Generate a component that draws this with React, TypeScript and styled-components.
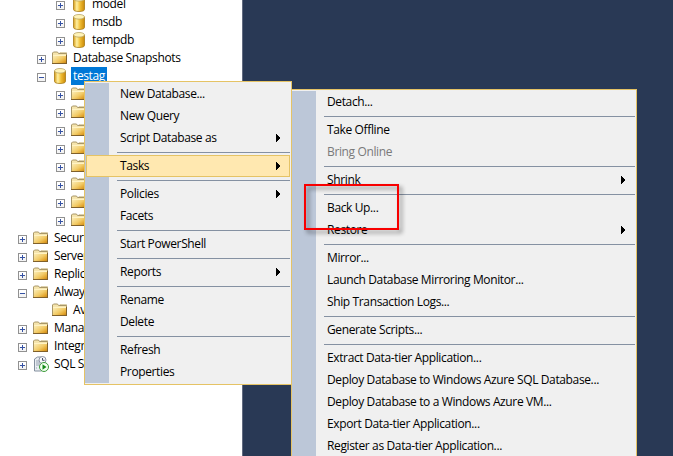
import React from "react";
import styled, { createGlobalStyle } from "styled-components";

const GlobalStyle = createGlobalStyle`
  * { box-sizing: border-box; }
  body { margin: 0; overflow: hidden; }
`;

const Window = styled.main`
  position: relative;
  display: flex;
  width: 673px;
  height: 456px;
  overflow: hidden;
  background: #293955;
  color: #000;
  font: 12px/18px "Open Sans", "Noto Sans", sans-serif;
  letter-spacing: -0.37px;
  white-space: nowrap;
`;

const Explorer = styled.aside`
  width: 243px;
  height: 456px;
  overflow: hidden;
  background: #fff;
  border-right: 1px solid #626b80;
`;

const Tree = styled.div`
  margin-top: -5px;
`;

const Row = styled.div<{ $level: number }>`
  display: flex;
  height: 18px;
  padding-left: ${(p) => p.$level * 19 - 1}px;
`;

const ExpanderSlot = styled.div`
  flex: none;
  width: 15px;
  padding-top: 6px;
  line-height: 0;
`;

const IconSlot = styled.div`
  flex: none;
  width: 17px;
  line-height: 0;
  margin-right: 2px;
`;

const Label = styled.span<{ $selected?: boolean }>`
  height: 18px;
  padding: 0 2px;
  line-height: 18px;
  color: ${(p) => (p.$selected ? "#fff" : "#000")};
  background: ${(p) => (p.$selected ? "#0078d7" : "transparent")};
`;

const Menu = styled.div<{ $x: number; $y: number; $width: number }>`
  position: absolute;
  left: ${(p) => p.$x}px;
  top: ${(p) => p.$y}px;
  width: ${(p) => p.$width}px;
  padding: 1px 1px 1px 0;
  border: 1px solid #e5c365;
  background: #f0f0f0;
`;

const MenuBody = styled.div`
  padding-left: 1px;
  background: linear-gradient(90deg, #bcc7d8 24px, #f0f0f0 24px);
`;

const MenuItem = styled.div<{ $active?: boolean; $disabled?: boolean }>`
  display: flex;
  align-items: flex-start;
  justify-content: space-between;
  height: 22px;
  padding: 1px 9px 0 33px;
  border: 1px solid ${(p) => (p.$active ? "#e5c365" : "transparent")};
  background: ${(p) => (p.$active ? "#ffe8b0" : "transparent")};
  color: ${(p) => (p.$disabled ? "#7a7a7a" : "#000")};
`;

const Arrow = styled.svg`
  display: block;
  width: 4px;
  height: 8px;
  margin-top: 5px;
`;

const Divider = styled.div`
  height: 6px;
  padding: 3px 0 2px 31px;

  &::before {
    content: "";
    display: block;
    height: 1px;
    background: #8591a2;
  }
`;

const Highlight = styled.div`
  position: absolute;
  left: 304px;
  top: 184px;
  width: 95px;
  height: 46px;
  border: 2px solid #f80000;
  filter: drop-shadow(3px 3px 2px rgba(0, 0, 0, 0.45));
`;

const Definitions = styled.svg`
  display: block;
  width: 0;
  height: 0;
`;

const Expander = ({ open }: { open?: boolean }) => (
  <svg width="9" height="9" shapeRendering="crispEdges">
    <rect x=".5" y=".5" width="8" height="8" fill="#f4f4f4" stroke="#919191" />
    <path d="M1 1h7v3H1z" fill="#fff" />
    <path d={open ? "M2 4h5v1H2z" : "M2 4h5v1H2zM4 2h1v5H4z"} fill="#3552a4" />
  </svg>
);

const FolderIcon = () => (
  <svg width="16" height="18">
    <path d="M8 3.500h6.500V6H8z" fill="#f6e9bd" stroke="#c9b98a" strokeWidth=".6" />
    <path d="M.5 14.500v-10.500l1-1h4l1 1.500h8v10z" fill="#f5e4ac" stroke="#a99768" />
    <path d="M1 6h14v9H1z" fill="url(#folderFace)" />
    <path d="M1 6.500h13" stroke="#fff3c4" />
    <path d="M0 14.500h15M14.500 6v9" stroke="#80602a" fill="none" />
  </svg>
);

const DatabaseIcon = () => (
  <svg width="16" height="18">
    <path d="M2.500 4v10.500c0 1.300 2.400 2 5.500 2s5.500-.7 5.500-2V4z" fill="url(#dbBody)" stroke="#a77b16" strokeWidth=".8" />
    <ellipse cx="8" cy="3.800" rx="5.500" ry="2.300" fill="#fff3b6" stroke="#b9a468" strokeWidth=".8" />
  </svg>
);

const AgentIcon = () => (
  <svg width="17" height="18">
    <path d="M1.500 4l3-2h5v13l-1 1h-7z" fill="#e9edf2" stroke="#84909f" />
    <path d="M3 6h4M3 8h4M3 10h4M3 13h1" stroke="#98a4b3" />
    <circle cx="9.500" cy="5" r="3.500" fill="#f7f8fb" stroke="#8d94a6" />
    <path d="M9.500 3v2.300h2" fill="none" stroke="#434d68" />
    <circle cx="11" cy="12" r="4.500" fill="#f3fff0" stroke="#3c9b3a" />
    <path d="M9.500 9.300v5.400l4-2.700z" fill="#148a18" />
  </svg>
);

const Gradients = () => (
  <Definitions>
    <defs>
      <linearGradient id="folderFace" x1="0" y1="0" x2="1" y2="1">
        <stop offset="0" stopColor="#fcf0bd" />
        <stop offset=".5" stopColor="#f2cb67" />
        <stop offset=".75" stopColor="#e3a52d" />
        <stop offset="1" stopColor="#b67610" />
      </linearGradient>
      <linearGradient id="dbBody">
        <stop offset="0" stopColor="#d79c18" />
        <stop offset=".3" stopColor="#fff0a0" />
        <stop offset=".6" stopColor="#f0bd33" />
        <stop offset="1" stopColor="#c98809" />
      </linearGradient>
    </defs>
  </Definitions>
);

type Node = {
  level: number;
  icon: "database" | "folder" | "agent";
  label?: string;
  state?: "open" | "leaf";
  selected?: boolean;
};

const nodes: Node[] = [
  { level: 3, icon: "database", label: "model" },
  { level: 3, icon: "database", label: "msdb" },
  { level: 3, icon: "database", label: "tempdb" },
  { level: 2, icon: "folder", label: "Database Snapshots" },
  { level: 2, icon: "database", label: "testag", state: "open", selected: true },
  ...Array.from({ length: 8 }, (): Node => ({ level: 3, icon: "folder" })),
  { level: 1, icon: "folder", label: "Secur" },
  { level: 1, icon: "folder", label: "Server" },
  { level: 1, icon: "folder", label: "Replic" },
  { level: 1, icon: "folder", label: "Alway", state: "open" },
  { level: 2, icon: "folder", label: "Av", state: "leaf" },
  { level: 1, icon: "folder", label: "Mana" },
  { level: 1, icon: "folder", label: "Integr" },
  { level: 1, icon: "agent", label: "SQL S" },
];

const icons = { database: DatabaseIcon, folder: FolderIcon, agent: AgentIcon };

type Entry = { text: string; sub?: boolean; active?: boolean; disabled?: boolean } | null;

const databaseMenu: Entry[] = [
  { text: "New Database..." },
  { text: "New Query" },
  { text: "Script Database as", sub: true },
  null,
  { text: "Tasks", sub: true, active: true },
  null,
  { text: "Policies", sub: true },
  { text: "Facets" },
  null,
  { text: "Start PowerShell" },
  null,
  { text: "Reports", sub: true },
  null,
  { text: "Rename" },
  { text: "Delete" },
  null,
  { text: "Refresh" },
  { text: "Properties" },
];

const tasksMenu: Entry[] = [
  { text: "Detach..." },
  null,
  { text: "Take Offline" },
  { text: "Bring Online", disabled: true },
  null,
  { text: "Shrink", sub: true },
  null,
  { text: "Back Up..." },
  { text: "Restore", sub: true },
  null,
  { text: "Mirror..." },
  { text: "Launch Database Mirroring Monitor..." },
  { text: "Ship Transaction Logs..." },
  null,
  { text: "Generate Scripts..." },
  null,
  { text: "Extract Data-tier Application..." },
  { text: "Deploy Database to Windows Azure SQL Database..." },
  { text: "Deploy Database to a Windows Azure VM..." },
  { text: "Export Data-tier Application..." },
  { text: "Register as Data-tier Application..." },
];

const ContextMenu = ({ entries, x, y, width }: { entries: Entry[]; x: number; y: number; width: number }) => (
  <Menu $x={x} $y={y} $width={width}>
    <MenuBody>
      {entries.map((e, i) =>
        e ? (
          <MenuItem key={i} $active={e.active} $disabled={e.disabled}>
            <span>{e.text}</span>
            {e.sub && (
              <Arrow viewBox="0 0 4 8" shapeRendering="crispEdges">
                <path d="M0 0h1v1h1v1h1v1h1v2H3v1H2v1H1v1H0z" />
              </Arrow>
            )}
          </MenuItem>
        ) : (
          <Divider key={i} />
        ),
      )}
    </MenuBody>
  </Menu>
);

export default function App() {
  return (
    <Window>
      <GlobalStyle />
      <Explorer>
        <Gradients />
        <Tree>
          {nodes.map((n, i) => {
            const Icon = icons[n.icon];
            return (
              <Row key={i} $level={n.level}>
                <ExpanderSlot>{n.state !== "leaf" && <Expander open={n.state === "open"} />}</ExpanderSlot>
                <IconSlot><Icon /></IconSlot>
                {n.label && <Label $selected={n.selected}>{n.label}</Label>}
              </Row>
            );
          })}
        </Tree>
      </Explorer>
      <ContextMenu entries={tasksMenu} x={291} y={89} width={346} />
      <ContextMenu entries={databaseMenu} x={84} y={81} width={208} />
      <Highlight />
    </Window>
  );
}
